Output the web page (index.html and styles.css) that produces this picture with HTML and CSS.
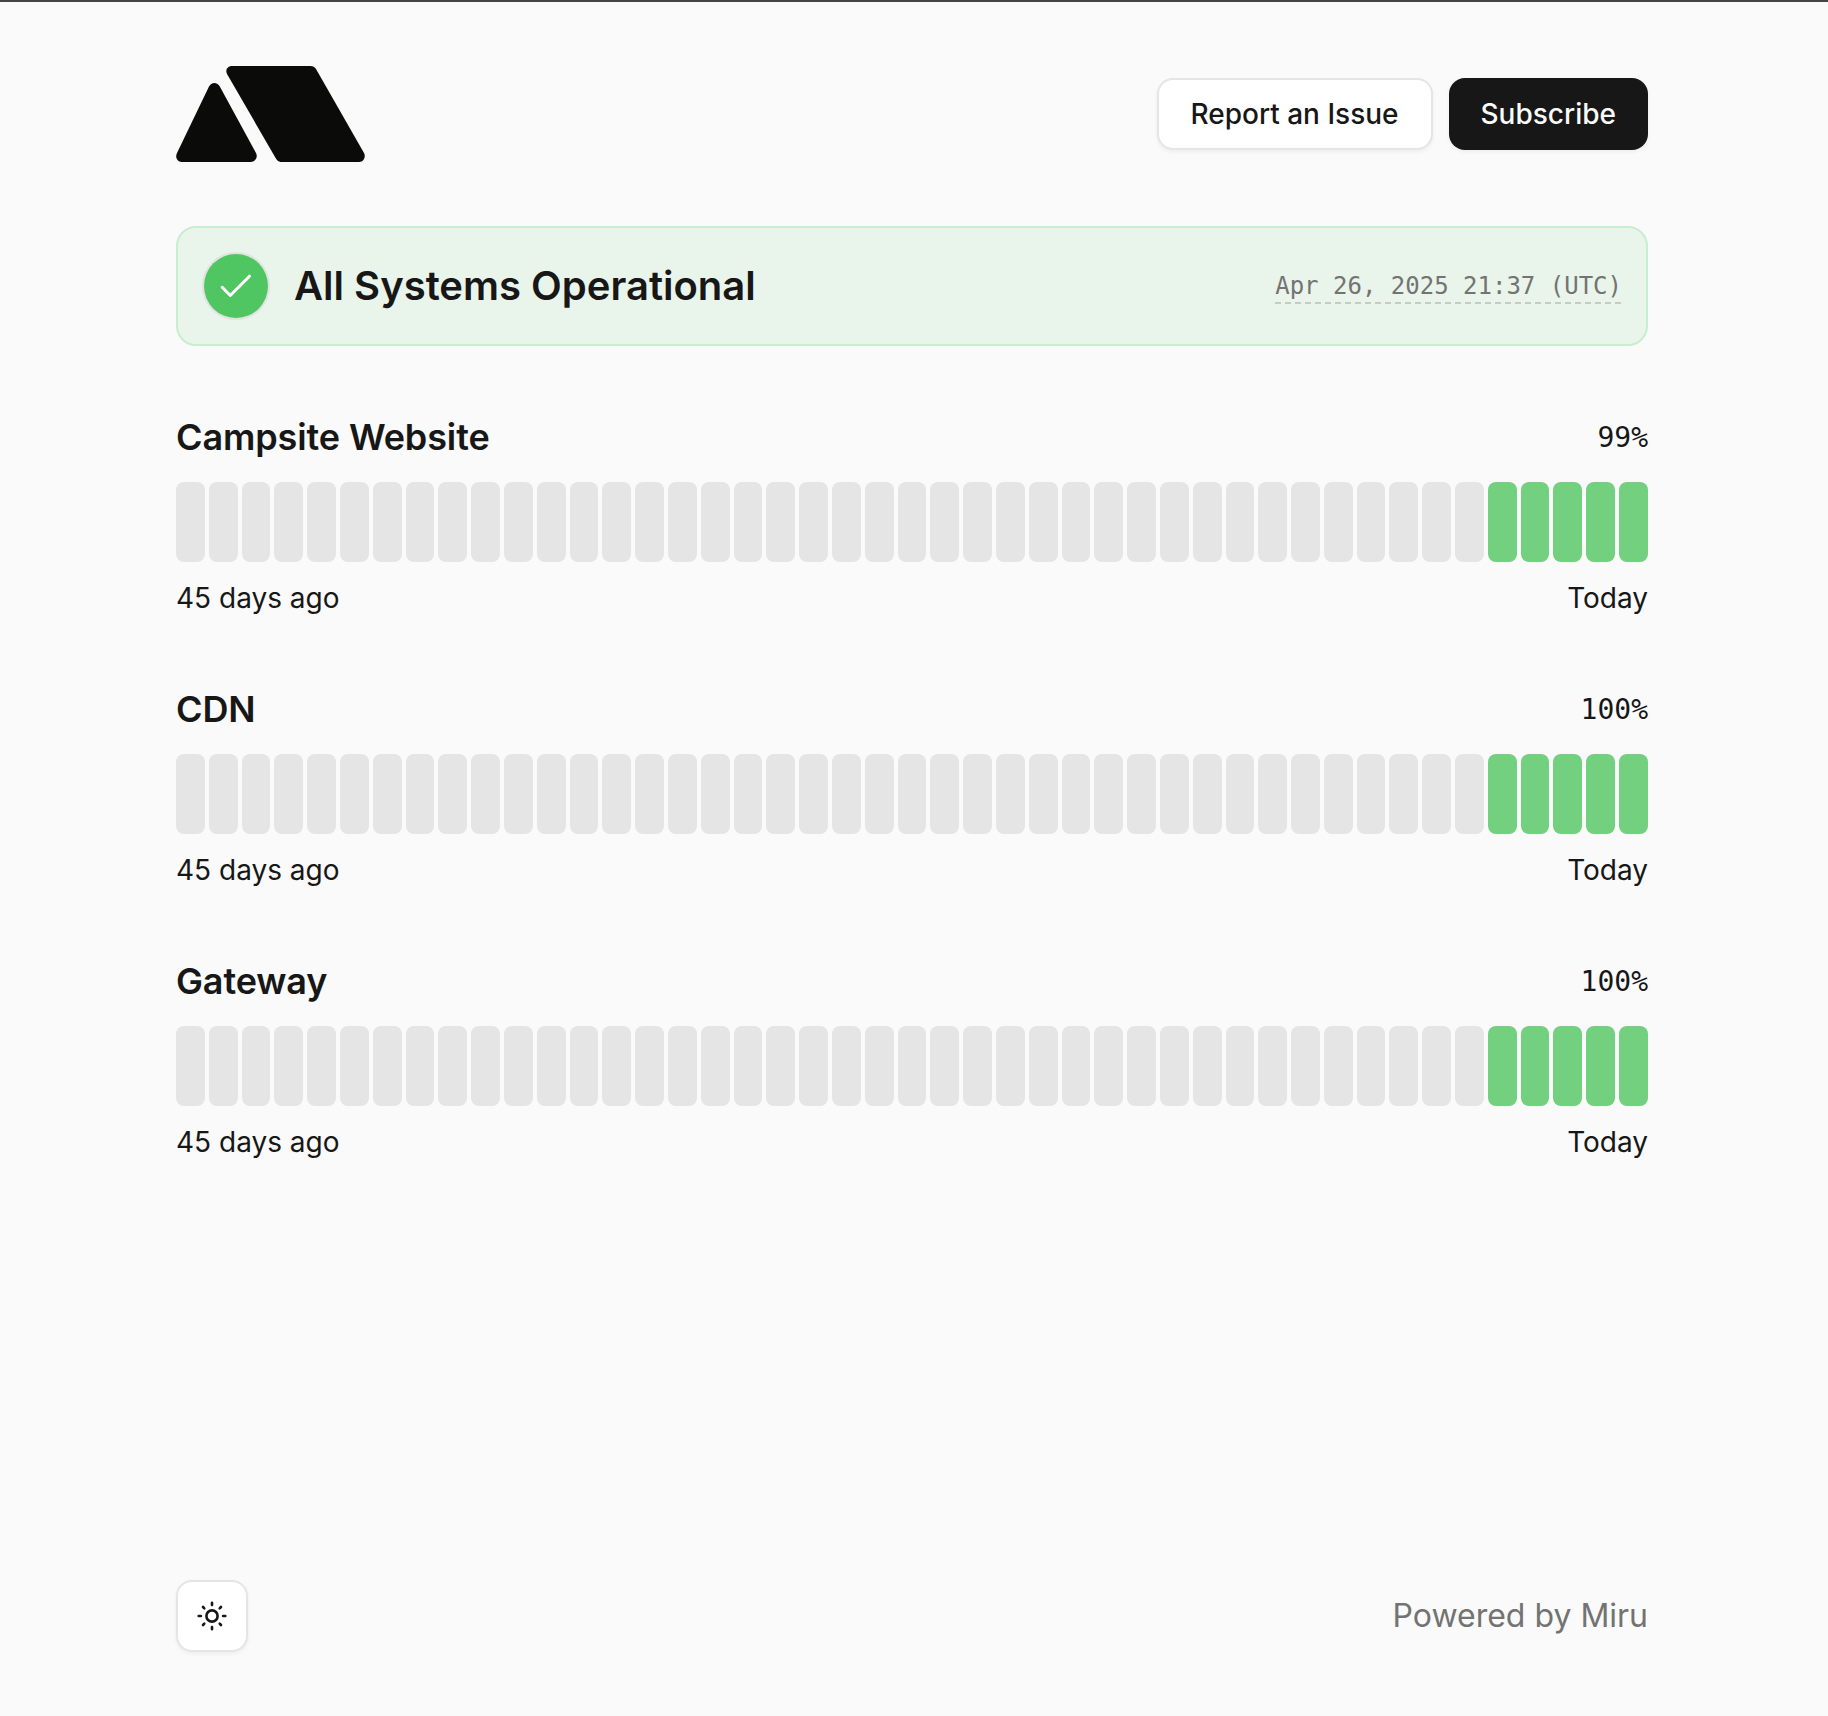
FILE: index.html
```html
<!DOCTYPE html>
<html lang="en">
<head>
<meta charset="utf-8">
<title>Campsite Status</title>
<link rel="stylesheet" href="styles.css">
</head>
<body>
<div class="page">
  <header class="header">
    <svg class="logo" width="190" height="96" viewBox="0 0 190 96" fill="#0b0c09" role="img" aria-label="Campsite">
      <path d="M33 20.5Q35 17 38.300 17Q41.800 17 43.800 20.500L80 87Q81.500 90 80 92.700Q78 96 74.500 96H6Q2.500 96 0.800 93Q-0.500 90.300 1 87Z"/>
      <path d="M55 0H134.500Q138 0 140 3L188 87Q189.500 90 188 93Q186.500 96 183 96H104.500Q102 96 100.200 93L51.300 8.500Q49.500 5 51 2.500Q52.500 0 55 0Z"/>
    </svg>
    <div class="actions">
      <button class="button">Report an Issue</button>
      <button class="button button-primary">Subscribe</button>
    </div>
  </header>

  <div class="banner">
    <span class="banner-icon">
      <svg width="36" height="36" viewBox="0 0 36 36" fill="none" stroke="#fff" stroke-width="3" stroke-linecap="round" stroke-linejoin="round"><path d="M4.200 19.300L12.300 27.500L31.500 8.200"/></svg>
    </span>
    <h1 class="banner-title">All Systems Operational</h1>
    <time class="banner-time">Apr 26, 2025 21:37 (UTC)</time>
  </div>

  <main class="monitors" id="monitors">
    <section class="monitor">
      <div class="row head"><h2 class="name">Campsite Website</h2><span class="uptime">99%</span></div>
      <div class="bars"></div>
      <div class="row range"><span>45 days ago</span><span>Today</span></div>
    </section>
    <section class="monitor">
      <div class="row head"><h2 class="name">CDN</h2><span class="uptime">100%</span></div>
      <div class="bars"></div>
      <div class="row range"><span>45 days ago</span><span>Today</span></div>
    </section>
    <section class="monitor">
      <div class="row head"><h2 class="name">Gateway</h2><span class="uptime">100%</span></div>
      <div class="bars"></div>
      <div class="row range"><span>45 days ago</span><span>Today</span></div>
    </section>
  </main>

  <footer class="footer">
    <button class="theme" aria-label="Theme">
      <svg width="32" height="32" viewBox="0 0 32 32" fill="none" stroke="#171717" stroke-width="2.600" stroke-linecap="round">
        <circle cx="16" cy="16" r="5.600"/>
        <path d="M16 2.700v2.200M16 27.100v2.200M2.700 16h2.200M27.100 16h2.200M7 7l1.300 1.300M23.700 23.700l1.300 1.300M7 25l1.300-1.300M23.700 8.300L25 7"/>
      </svg>
    </button>
    <span class="credit">Powered by Miru</span>
  </footer>
</div>
<script src="bars.js"></script>
</body>
</html>
```
FILE: styles.css
```css
* { box-sizing: border-box; }
body {
  margin: 0;
  background: #fafafa;
  color: #171717;
  font-family: Inter, sans-serif;
  font-size: 28px;
}
h1, h2 { margin: 0; font-weight: 600; }
button { font: inherit; color: inherit; }
.page {
  display: flex;
  flex-direction: column;
  height: 1716px;
  padding: 64px 180px 64px 176px;
  border-top: 2px solid #454345;
}
.header, .row, .footer { display: flex; justify-content: space-between; align-items: center; }
.header { height: 96px; }
.logo { display: block; }
.actions { display: flex; gap: 16px; }
.button {
  height: 72px;
  padding: 0 32px 0 31px;
  border: 2px solid #e5e5e5;
  border-radius: 16px;
  background: #fff;
  font-weight: 500;
  white-space: nowrap;
  box-shadow: 0 2px 4px rgb(0 0 0 / 5%);
}
.button-primary { padding: 0 32px; border: 0; background: #171717; color: #fafafa; }
.banner {
  display: flex;
  align-items: center;
  height: 120px;
  margin-top: 64px;
  padding: 0 24px 0 26px;
  border: 2px solid #c8edcf;
  border-radius: 20px;
  background: #e9f4ea;
}
.banner-icon {
  display: grid;
  place-items: center;
  width: 64px;
  height: 64px;
  border-radius: 50%;
  background: #50c663;
  box-shadow: 0 0 0 2px rgb(219 219 219 / 70%);
}
.banner-title { margin-left: 26px; font-size: 40px; line-height: 56px; }
.banner-time {
  margin: 2px 0 0 auto;
  padding-bottom: 2px;
  background: repeating-linear-gradient(90deg, #c4cdc5 0 6px, transparent 6px 10px) left bottom / 100% 2px no-repeat;
  color: #737373;
  font-family: "DejaVu Sans Mono", monospace;
  font-size: 24px;
  line-height: 32px;
}
.monitors { display: flex; flex-direction: column; gap: 64px; margin-top: 64px; }
.monitor { display: flex; flex-direction: column; gap: 16px; }
.head { height: 56px; padding-bottom: 2px; }
.name { font-size: 36px; line-height: 54px; letter-spacing: -0.12px; }
.uptime { font-family: "DejaVu Sans Mono", monospace; }
.bars { display: flex; gap: 4px; height: 80px; }
.bar { flex: 1; border-radius: 8px; background: #e5e5e5; }
.bar-up { background: #72d07f; }
.range { line-height: 40px; }
.footer { margin-top: auto; color: #737373; font-size: 32px; }
.credit { padding-bottom: 2px; }
.theme {
  display: grid;
  place-items: center;
  width: 72px;
  height: 72px;
  padding: 0;
  border: 2px solid #e5e5e5;
  border-radius: 16px;
  background: #fff;
  box-shadow: 0 2px 4px rgb(0 0 0 / 5%);
}
```
FILE: bars.js
```js
const DAYS = 45;
const TRACKED = 5;
document.querySelectorAll(".bars").forEach((bars) => {
  for (let day = 0; day < DAYS; day++) {
    const bar = document.createElement("span");
    bar.className = day >= DAYS - TRACKED ? "bar bar-up" : "bar";
    bars.append(bar);
  }
});
```
